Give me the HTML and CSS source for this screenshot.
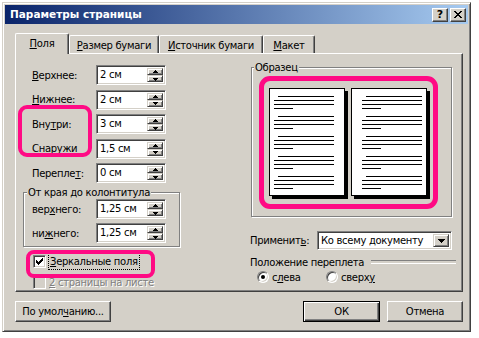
FILE: index.html
```html
<!DOCTYPE html>
<html lang="ru">
<head>
    <meta charset="UTF-8">
    <meta name="viewport" content="width=device-width, initial-scale=1.0">
    <title>Параметры страницы</title>
    <link rel="stylesheet" href="styles.css">
</head>
<body>
<div class="screen">
    <div class="window">
        <div class="titlebar">
            <span class="title">Параметры страницы</span>
            <span class="caption-btn help">?</span>
            <span class="caption-btn close">
                <svg width="8" height="7" viewBox="0 0 8 7" shape-rendering="crispEdges">
                    <path d="M0 0h2v1h-2zM6 0h2v1h-2zM1 1h2v1h-2zM5 1h2v1h-2zM2 2h4v1h-4zM3 3h2v1h-2zM2 4h4v1h-4zM1 5h2v1h-2zM5 5h2v1h-2zM0 6h2v1h-2zM6 6h2v1h-2z" fill="#000"/>
                </svg>
            </span>
        </div>

        <div class="tabs">
            <div class="tab tab-active"><span><u>П</u>оля</span></div>
            <div class="tab tab-size"><span><u>Р</u>азмер бумаги</span></div>
            <div class="tab tab-source"><span><u>И</u>сточник бумаги</span></div>
            <div class="tab tab-layout"><span><u>М</u>акет</span></div>
        </div>

        <div class="panel">
            <div class="col-left">
                <div class="field">
                    <label><u>В</u>ерхнее:</label>
                    <div class="spin"><span class="spin-value">2 см</span><div class="spin-btns"><span class="spin-btn up"></span><span class="spin-btn down"></span></div></div>
                </div>
                <div class="field">
                    <label><u>Н</u>ижнее:</label>
                    <div class="spin"><span class="spin-value">2 см</span><div class="spin-btns"><span class="spin-btn up"></span><span class="spin-btn down"></span></div></div>
                </div>
                <div class="field">
                    <label>Вну<u>т</u>ри:</label>
                    <div class="spin"><span class="spin-value">3 см</span><div class="spin-btns"><span class="spin-btn up"></span><span class="spin-btn down"></span></div></div>
                </div>
                <div class="field">
                    <label>Сн<u>а</u>ружи</label>
                    <div class="spin"><span class="spin-value">1,5 см</span><div class="spin-btns"><span class="spin-btn up"></span><span class="spin-btn down"></span></div></div>
                </div>
                <div class="field">
                    <label>Перепле<u>т</u>:</label>
                    <div class="spin"><span class="spin-value">0 см</span><div class="spin-btns"><span class="spin-btn up"></span><span class="spin-btn down"></span></div></div>
                </div>

                <fieldset class="group group-hf">
                    <legend>От края до колонтитула</legend>
                    <div class="group-body">
                        <div class="field">
                            <label>вер<u>х</u>него:</label>
                            <div class="spin"><span class="spin-value">1,25 см</span><div class="spin-btns"><span class="spin-btn up"></span><span class="spin-btn down"></span></div></div>
                        </div>
                        <div class="field">
                            <label>ни<u>ж</u>него:</label>
                            <div class="spin"><span class="spin-value">1,25 см</span><div class="spin-btns"><span class="spin-btn up"></span><span class="spin-btn down"></span></div></div>
                        </div>
                    </div>
                </fieldset>

                <div class="check-row">
                    <span class="checkbox">
                        <svg width="7" height="7" viewBox="0 0 7 7" shape-rendering="crispEdges">
                            <path d="M6 0h1v3h-1zM5 1h1v3h-1zM4 2h1v3h-1zM3 3h1v3h-1zM2 4h1v3h-1zM1 3h1v3h-1zM0 2h1v3h-1z" fill="#000"/>
                        </svg>
                    </span>
                    <span class="focus"><u>З</u>еркальные поля</span>
                </div>
                <div class="check-row check-disabled">
                    <span class="checkbox"></span>
                    <span class="check-text"><u>2</u> страницы на листе</span>
                </div>
            </div>

            <div class="col-right">
                <fieldset class="group group-preview">
                    <legend>Образец</legend>
                    <div class="pages">
                        <div class="page">
                            <div class="para"><i class="ln ln-first"></i><i class="ln"></i><i class="ln"></i><i class="ln ln-last"></i></div>
                            <div class="para"><i class="ln ln-first"></i><i class="ln"></i><i class="ln"></i><i class="ln ln-last"></i></div>
                            <div class="para"><i class="ln ln-first"></i><i class="ln"></i><i class="ln"></i><i class="ln ln-last"></i></div>
                            <div class="para"><i class="ln ln-first"></i><i class="ln"></i><i class="ln"></i><i class="ln ln-last"></i></div>
                            <div class="para"><i class="ln ln-first"></i><i class="ln"></i><i class="ln"></i><i class="ln ln-last"></i></div>
                        </div>
                        <div class="page page-right">
                            <div class="para"><i class="ln ln-first"></i><i class="ln"></i><i class="ln"></i><i class="ln ln-last"></i></div>
                            <div class="para"><i class="ln ln-first"></i><i class="ln"></i><i class="ln"></i><i class="ln ln-last"></i></div>
                            <div class="para"><i class="ln ln-first"></i><i class="ln"></i><i class="ln"></i><i class="ln ln-last"></i></div>
                            <div class="para"><i class="ln ln-first"></i><i class="ln"></i><i class="ln"></i><i class="ln ln-last"></i></div>
                            <div class="para"><i class="ln ln-first"></i><i class="ln"></i><i class="ln"></i><i class="ln ln-last"></i></div>
                        </div>
                    </div>
                </fieldset>

                <div class="apply-row">
                    <label>Применит<u>ь</u>:</label>
                    <div class="select">
                        <span class="select-value">Ко всему документу</span>
                        <span class="select-btn"></span>
                    </div>
                </div>

                <div class="binding-head">Положение переплета</div>
                <div class="radio-row">
                    <span class="radio-opt"><span class="radio radio-on"></span><span>с<u>л</u>ева</span></span>
                    <span class="radio-opt"><span class="radio"></span><span>сверх<u>у</u></span></span>
                </div>
            </div>
        </div>

        <div class="buttons">
            <button class="btn btn-defaults">По умол<u>ч</u>анию...</button>
            <button class="btn btn-default btn-ok">ОК</button>
            <button class="btn btn-cancel">Отмена</button>
        </div>
    </div>

    <!-- pink highlight marks drawn over the dialog -->
    <div class="mark mark-margins"></div>
    <div class="mark mark-preview"></div>
    <div class="mark mark-mirror"></div>
</div>
</body>
</html>
```

FILE: styles.css
```css
* {
    box-sizing: border-box;
}
body {
    margin: 0;
    background: #fff;
    font-family: "DejaVu Sans", Verdana, sans-serif;
    font-size: 10px;
    line-height: 13px;
    letter-spacing: -0.3px;
    color: #000;
}
u {
    text-decoration: underline;
    text-underline-offset: 1px;
}
.screen {
    position: relative;
    width: 479px;
    height: 338px;
    overflow: hidden;
}
.window {
    width: 469px;
    height: 330px;
    margin: 2px 0 0 2px;
    padding: 2px;
    background: #d4d0c8;
    border: 1px solid;
    border-color: #d4d0c8 #404040 #404040 #d4d0c8;
    box-shadow: inset 1px 1px #fff, inset -1px -1px #808080;
    display: flex;
    flex-direction: column;
}

/* title bar */
.titlebar {
    height: 19px;
    display: flex;
    align-items: center;
    padding: 0 2px 0 5px;
    background: linear-gradient(to right, #0a246a, #a6caf0);
    color: #fff;
    font-weight: bold;
    font-size: 10.5px;
    letter-spacing: 0;
}
.title {
    flex: 1;
}
.caption-btn {
    width: 16px;
    height: 14px;
    display: flex;
    align-items: center;
    justify-content: center;
    background: #d4d0c8;
    color: #000;
    border: 1px solid;
    border-color: #fff #404040 #404040 #fff;
    box-shadow: inset -1px -1px #808080;
    font-size: 11px;
    line-height: 11px;
}
.close {
    margin-left: 2px;
}

/* tabs */
.tabs {
    display: flex;
    align-items: flex-end;
    height: 20px;
    margin: 9px 0 0 10px;
    position: relative;
    z-index: 1;
}
.tab {
    height: 18px;
    display: flex;
    align-items: center;
    justify-content: center;
    background: #d4d0c8;
    border: 1px solid;
    border-bottom: none;
    border-color: #fff #404040 #404040 #fff;
    border-radius: 2px 2px 0 0;
    box-shadow: inset -1px 0 #808080;
    padding-top: 1px;
    white-space: nowrap;
}
.tab-active {
    width: 54px;
    height: 21px;
    margin-bottom: -1px;
    padding-bottom: 3px;
}
.tab-size {
    width: 90px;
}
.tab-source {
    width: 104px;
}
.tab-layout {
    width: 52px;
}

/* tab page */
.panel {
    width: 448px;
    height: 239px;
    margin-left: 10px;
    display: flex;
    overflow: hidden;
    border: 1px solid;
    border-color: #fff #404040 #404040 #fff;
    box-shadow: inset -1px -1px #808080;
}
.col-left {
    width: 234px;
    padding: 11px 0 0 7px;
    display: flex;
    flex-direction: column;
}
.col-right {
    width: 204px;
    padding-top: 6.5px;
    display: flex;
    flex-direction: column;
}

.field {
    display: flex;
    align-items: center;
    height: 20px;
    padding-left: 9px;
    margin-bottom: 4.5px;
}
.field label {
    width: 64px;
    white-space: nowrap;
}

/* spin edit */
.spin {
    width: 70px;
    height: 20px;
    display: flex;
    padding: 2px;
    background: #fff;
    border: 1px solid;
    border-color: #808080 #fff #fff #808080;
    box-shadow: inset 1px 1px #404040, inset -1px -1px #d4d0c8;
}
.spin-value {
    flex: 1;
    padding-left: 1px;
    line-height: 14px;
    white-space: nowrap;
}
.spin-btns {
    width: 16px;
    display: flex;
    flex-direction: column;
}
.spin-btn {
    flex: 1;
    display: flex;
    align-items: center;
    justify-content: center;
    background: #d4d0c8;
    border: 1px solid;
    border-color: #d4d0c8 #404040 #404040 #d4d0c8;
    box-shadow: inset 1px 1px #fff, inset -1px -1px #808080;
}
.spin-btn::after {
    content: "";
    width: 1px;
    height: 1px;
    background: #000;
}
.spin-btn.up::after {
    margin-top: -2px;
    box-shadow: -1px 1px #000, 0 1px #000, 1px 1px #000,
        -2px 2px #000, -1px 2px #000, 0 2px #000, 1px 2px #000, 2px 2px #000;
}
.spin-btn.down::after {
    margin-top: -1px;
    box-shadow: -2px 0 #000, -1px 0 #000, 1px 0 #000, 2px 0 #000,
        -1px 1px #000, 0 1px #000, 1px 1px #000, 0 2px #000;
}

/* group boxes */
.group {
    margin: 0;
    padding: 0;
    min-width: 0;
    border: 1px solid #808080;
    box-shadow: inset 1px 1px #fff, 1px 1px #fff;
}
.group legend {
    padding: 0 1px;
    background: #d4d0c8;
    line-height: 13px;
    white-space: nowrap;
}
.group-hf {
    width: 157px;
    margin-top: -2px;
}
.group-hf legend {
    margin-left: 3px;
}
.group-body {
    padding: 0.5px 0 3px 8px;
}
.group-body .field {
    padding-left: 0;
    margin-bottom: 4px;
}
.group-body .field:last-child {
    margin-bottom: 0;
}

/* check boxes */
.check-row {
    display: flex;
    align-items: center;
    height: 17px;
    margin-top: 6px;
    padding-left: 10px;
    white-space: nowrap;
}
.checkbox {
    width: 13px;
    height: 13px;
    flex-shrink: 0;
    display: flex;
    align-items: center;
    justify-content: center;
    background: #fff;
    border: 1px solid;
    border-color: #808080 #fff #fff #808080;
    box-shadow: inset 1px 1px #404040, inset -1px -1px #d4d0c8;
}
.focus {
    margin-left: 2px;
    padding: 0 1px;
    border: 1px dotted #000;
    line-height: 15px;
}
.check-disabled {
    margin-top: 5px;
    height: 15px;
    color: #808080;
}
.check-disabled .checkbox {
    background: #d4d0c8;
}
.check-text {
    margin-left: 3px;
    text-shadow: 1px 1px #fff;
}

/* preview */
.group-preview {
    width: 201px;
    margin-left: 1px;
}
.group-preview legend {
    margin-left: 2px;
}
.pages {
    display: flex;
    gap: 6px;
    padding: 14.5px 0 20px 17px;
}
.page {
    width: 76px;
    height: 108px;
    padding: 7px 0 0 4px;
    background: #fff;
    border: 1px solid #000;
    box-shadow: 3px 3px 0 #000;
}
.page-right {
    padding-left: 10px;
}
.para {
    display: flex;
    flex-direction: column;
    gap: 3px;
    margin-bottom: 7px;
}
.ln {
    display: block;
    width: 60px;
    height: 1px;
    background: #000;
}
.ln-first {
    width: 56px;
    margin-left: 4px;
}
.ln-last {
    width: 19px;
}

/* apply to */
.apply-row {
    display: flex;
    align-items: center;
    margin-top: 14px;
    white-space: nowrap;
}
.apply-row label {
    width: 67px;
}
.select {
    width: 135px;
    height: 19px;
    display: flex;
    padding: 2px;
    background: #fff;
    border: 1px solid;
    border-color: #808080 #fff #fff #808080;
    box-shadow: inset 1px 1px #404040, inset -1px -1px #d4d0c8;
}
.select-value {
    flex: 1;
    padding-left: 1px;
    line-height: 13px;
    overflow: hidden;
}
.select-btn {
    width: 16px;
    flex-shrink: 0;
    display: flex;
    align-items: center;
    justify-content: center;
    background: #d4d0c8;
    border: 1px solid;
    border-color: #d4d0c8 #404040 #404040 #d4d0c8;
    box-shadow: inset 1px 1px #fff, inset -1px -1px #808080;
}
.select-btn::after {
    content: "";
    width: 1px;
    height: 1px;
    margin-top: -2px;
    background: #000;
    box-shadow: -3px 0 #000, -2px 0 #000, -1px 0 #000, 1px 0 #000, 2px 0 #000, 3px 0 #000,
        -2px 1px #000, -1px 1px #000, 0 1px #000, 1px 1px #000, 2px 1px #000,
        -1px 2px #000, 0 2px #000, 1px 2px #000, 0 3px #000;
}

/* binding position */
.binding-head {
    display: flex;
    align-items: center;
    margin-top: 5.5px;
    margin-right: -2px;
    white-space: nowrap;
}
.binding-head::after {
    content: "";
    flex: 1;
    height: 2px;
    margin-left: 7px;
    border-top: 1px solid #808080;
    border-bottom: 1px solid #fff;
}
.radio-row {
    display: flex;
    margin-top: 2px;
    padding-left: 7px;
}
.radio-opt {
    display: flex;
    align-items: center;
    gap: 3px;
    width: 69px;
}
.radio {
    width: 12px;
    height: 12px;
    display: flex;
    align-items: center;
    justify-content: center;
    border-radius: 50%;
    background: #fff;
    border: 1px solid;
    border-color: #808080 #fff #fff #808080;
    box-shadow: inset 1px 1px #404040, inset -1px -1px #d4d0c8;
}
.radio-on::after {
    content: "";
    width: 4px;
    height: 4px;
    border-radius: 50%;
    background: #000;
}

/* dialog buttons */
.buttons {
    display: flex;
    width: 448px;
    margin: 9px 0 0 10px;
}
.btn {
    height: 21px;
    padding: 0;
    font: inherit;
    letter-spacing: inherit;
    color: #000;
    white-space: nowrap;
    background: #d4d0c8;
    border: 1px solid;
    border-color: #fff #404040 #404040 #fff;
    box-shadow: inset -1px -1px #808080;
}
.btn-defaults {
    width: 96px;
}
.btn-ok {
    width: 77px;
    margin-left: auto;
}
.btn-default {
    border-color: #000;
    box-shadow: inset 1px 1px #fff, inset -1px -1px #404040, inset -2px -2px #808080;
}
.btn-cancel {
    width: 76px;
    margin-left: 7px;
}

/* highlight marks */
.mark {
    position: absolute;
    border: 4px solid #ff0a84;
    border-radius: 9px;
}
.mark-margins {
    left: 18px;
    top: 105px;
    width: 74px;
    height: 52px;
}
.mark-preview {
    left: 259px;
    top: 76px;
    width: 179px;
    height: 133px;
    border-width: 5px;
    border-radius: 11px;
}
.mark-mirror {
    left: 26px;
    top: 250px;
    width: 129px;
    height: 28px;
    border-radius: 8px;
}
```
